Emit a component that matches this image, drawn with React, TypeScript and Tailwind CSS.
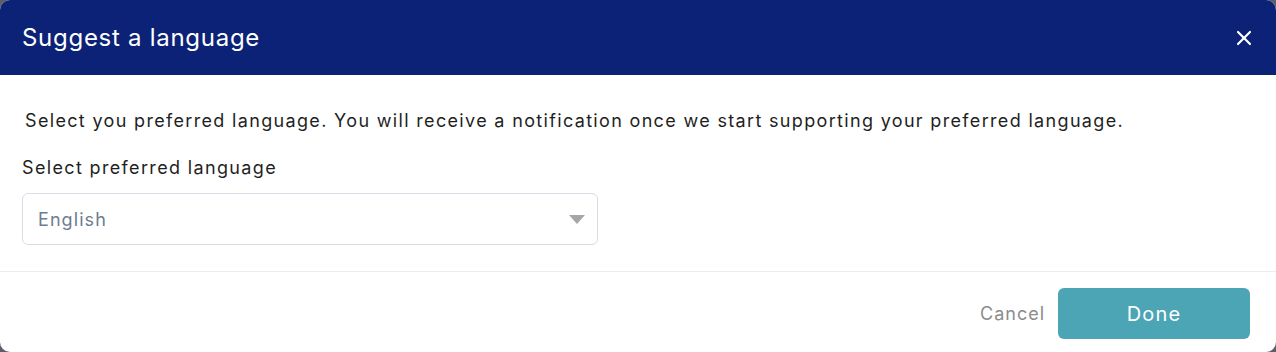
import { X } from "lucide-react";

export default function App() {
  return (
    <div className="h-[352px] w-[1276px] bg-[#5b5f6b]">
      <div className="flex h-full w-full flex-col overflow-hidden rounded-[10px] bg-white font-['Inter',sans-serif]">
        {/* Header */}
        <div className="flex h-[75px] shrink-0 items-center justify-between bg-[#0b2277] pl-[22px] pr-[20px]">
          <h2 className="text-[24px] font-normal tracking-[0.03em] text-white">Suggest a language</h2>
          <button type="button" className="text-white">
            <X size={24} strokeWidth={2.2} />
          </button>
        </div>

        {/* Body */}
        <div className="flex flex-col px-[22px] pt-[33px]">
          <p className="pl-[3px] text-[18px] leading-[26px] tracking-[0.074em] text-[#1f1f1f]">
            Select you preferred language. You will receive a notification once we start supporting your preferred language.
          </p>
          <label className="mt-[21px] text-[18px] leading-[26px] tracking-[0.075em] text-[#1f1f1f]">
            Select preferred language
          </label>
          <div className="mt-[12px] flex h-[52px] w-[576px] items-center justify-between rounded-[6px] border border-[#d8dce7] pl-[15px] pr-[12px]">
            <span className="text-[18px] tracking-[0.06em] text-[#6f7c91]">English</span>
            <svg width="16" height="9" viewBox="0 0 16 9">
              <path d="M0 0 L16 0 L8 9 Z" fill="#a6a6a6" />
            </svg>
          </div>
        </div>

        <div className="mt-[26px] h-px bg-[#ececec]" />

        {/* Footer */}
        <div className="flex items-center justify-end gap-[13px] pr-[26px] pt-[16px]">
          <button type="button" className="text-[18px] tracking-[0.055em] text-[#8c8c8c]">
            Cancel
          </button>
          <button
            type="button"
            className="h-[51px] w-[192px] rounded-[6px] bg-[#4ba5b5] text-[20px] tracking-[0.06em] text-white"
          >
            Done
          </button>
        </div>
      </div>
    </div>
  );
}
